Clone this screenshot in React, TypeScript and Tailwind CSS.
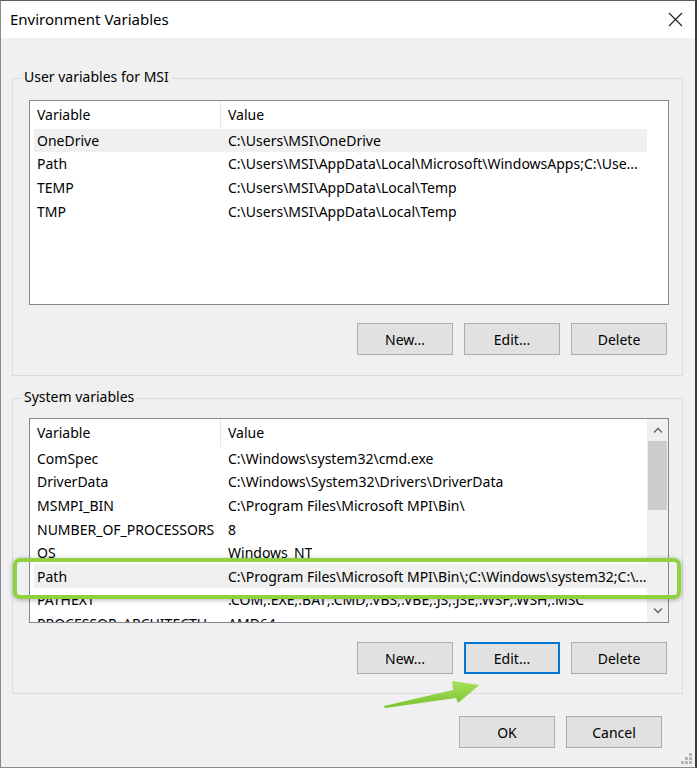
import React from 'react';

type Row = { name: string; value: string; selected?: boolean };

const userVars: Row[] = [
  { name: 'OneDrive', value: 'C:\\Users\\MSI\\OneDrive', selected: true },
  { name: 'Path', value: 'C:\\Users\\MSI\\AppData\\Local\\Microsoft\\WindowsApps;C:\\Use...' },
  { name: 'TEMP', value: 'C:\\Users\\MSI\\AppData\\Local\\Temp' },
  { name: 'TMP', value: 'C:\\Users\\MSI\\AppData\\Local\\Temp' },
];

const systemVars: Row[] = [
  { name: 'ComSpec', value: 'C:\\Windows\\system32\\cmd.exe' },
  { name: 'DriverData', value: 'C:\\Windows\\System32\\Drivers\\DriverData' },
  { name: 'MSMPI_BIN', value: 'C:\\Program Files\\Microsoft MPI\\Bin\\' },
  { name: 'NUMBER_OF_PROCESSORS', value: '8' },
  { name: 'OS', value: 'Windows_NT' },
  { name: 'Path', value: 'C:\\Program Files\\Microsoft MPI\\Bin\\;C:\\Windows\\system32;C:\\...', selected: true },
  { name: 'PATHEXT', value: '.COM;.EXE;.BAT;.CMD;.VBS;.VBE;.JS;.JSE;.WSF;.WSH;.MSC' },
  { name: 'PROCESSOR_ARCHITECTU...', value: 'AMD64' },
];

function Button({ label, focused }: { label: string; focused?: boolean }) {
  return (
    <div
      className={`w-[96px] h-[32px] flex items-center justify-center bg-[#e1e1e1] text-black ${
        focused ? 'border-2 border-[#0078d7]' : 'border border-[#adadad]'
      }`}
    >
      {label}
    </div>
  );
}

function VarTable({ rows, scroll }: { rows: Row[]; scroll?: boolean }) {
  return (
    <div className="w-[640px] h-[205px] border border-[#828790] bg-white flex overflow-hidden">
      {/* list */}
      <div className="flex-1 pl-[4px] overflow-hidden">
        <div className="flex h-[27.5px] items-center">
          <div className="w-[187px] h-full flex items-center pl-[3px] border-r border-[#e5e5e5]">Variable</div>
          <div className="pl-[7px]">Value</div>
        </div>
        {rows.map((r) => (
          <div
            key={r.name}
            className={`flex h-[23.6px] items-center whitespace-nowrap ${r.selected ? 'bg-[#f0f0f0]' : ''}`}
          >
            <div className="w-[187px] shrink-0 pl-[3px] overflow-hidden">{r.name}</div>
            <div className="pl-[7px] overflow-hidden">{r.value}</div>
          </div>
        ))}
      </div>

      {/* scrollbar column */}
      <div className={`w-[21px] h-full flex flex-col ${scroll ? 'bg-[#f0f0f0]' : 'bg-white'}`}>
        {scroll && (
          <>
            <div className="h-[22px] flex items-center justify-center">
              <svg width="10" height="6" viewBox="0 0 10 6">
                <path d="M1 5.5 L5 1.5 L9 5.5" fill="none" stroke="#606060" strokeWidth="1.3" />
              </svg>
            </div>
            <div className="mx-[1px] h-[69px] bg-[#cdcdcd]" />
            <div className="flex-1" />
            <div className="h-[22px] flex items-center justify-center">
              <svg width="10" height="6" viewBox="0 0 10 6">
                <path d="M1 0.5 L5 4.5 L9 0.5" fill="none" stroke="#606060" strokeWidth="1.3" />
              </svg>
            </div>
          </>
        )}
      </div>
    </div>
  );
}

function Group({
  title,
  rows,
  scroll,
  focusedEdit,
  className,
  tablePad,
  btnGap,
  bottomPad,
}: {
  title: string;
  rows: Row[];
  scroll?: boolean;
  focusedEdit?: boolean;
  className: string;
  tablePad: string;
  btnGap: string;
  bottomPad: string;
}) {
  return (
    <div className={`relative ml-[11px] w-[671px] border border-[#dcdcdc] pl-[16px] ${tablePad} ${bottomPad} ${className}`}>
      <span className="absolute left-[9px] -top-[12px] px-[2px] leading-[20px] bg-[#f0f0f0]">{title}</span>
      <VarTable rows={rows} scroll={scroll} />
      <div className={`w-[640px] flex justify-end gap-[11px] pr-[2px] ${btnGap}`}>
        <Button label="New..." />
        <Button label="Edit..." focused={focusedEdit} />
        <Button label="Delete" />
      </div>
    </div>
  );
}

export default function App() {
  return (
    <div
      className="relative w-[697px] h-[768px] overflow-hidden bg-[#f0f0f0] border-l border-t border-b border-r-2 border-l-[#8a8a8a] border-t-[#5a5a5a] border-b-[#8a8a8a] border-r-[#3c3c3c] text-[14px] text-black flex flex-col"
      style={{ fontFamily: '"Noto Sans", "Open Sans", Arial, sans-serif' }}
    >
      {/* Title bar */}
      <div className="h-[37px] shrink-0 bg-white flex items-center justify-between pl-[9px] pr-[12px]">
        <span className="text-[15px]">Environment Variables</span>
        <svg width="15" height="15" viewBox="0 0 15 15">
          <path d="M1 1 L14 14 M14 1 L1 14" stroke="#1a1a1a" strokeWidth="1.1" />
        </svg>
      </div>

      <Group
        title="User variables for MSI"
        rows={userVars}
        className="mt-[40px]"
        tablePad="pt-[21px]"
        btnGap="mt-[18px]"
        bottomPad="pb-[20px]"
      />

      <Group
        title="System variables"
        rows={systemVars}
        scroll
        focusedEdit
        className="mt-[22px]"
        tablePad="pt-[19px]"
        btnGap="mt-[19px]"
        bottomPad="pb-[19px]"
      />

      {/* OK / Cancel */}
      <div className="mt-[22px] flex justify-end gap-[11px] pr-[33px]">
        <Button label="OK" />
        <Button label="Cancel" />
      </div>

      {/* resize grip */}
      <div className="absolute right-[3px] bottom-[3px] grid grid-cols-3 gap-[1px]">
        <span className="w-[3px] h-[3px]" />
        <span className="w-[3px] h-[3px]" />
        <span className="w-[3px] h-[3px] bg-[#b5b5b5]" />
        <span className="w-[3px] h-[3px]" />
        <span className="w-[3px] h-[3px] bg-[#b5b5b5]" />
        <span className="w-[3px] h-[3px] bg-[#b5b5b5]" />
        <span className="w-[3px] h-[3px] bg-[#b5b5b5]" />
        <span className="w-[3px] h-[3px] bg-[#b5b5b5]" />
        <span className="w-[3px] h-[3px] bg-[#b5b5b5]" />
      </div>

      {/* green highlight annotation */}
      <div className="absolute left-[12px] top-[557px] w-[668px] h-[41px] rounded-[7px] border-[4px] border-[#8fd13f] shadow-[0_1px_5px_rgba(0,0,0,0.3)]" />

      {/* green arrow annotation */}
      <svg className="absolute left-[380px] top-[676px]" width="102" height="34" viewBox="380 676 102 34">
        <defs>
          <linearGradient id="arrowFill" x1="0" y1="0" x2="0" y2="1">
            <stop offset="0" stopColor="#a6e05a" />
            <stop offset="1" stopColor="#7cc22e" />
          </linearGradient>
        </defs>
        <polygon
          points="383,705 452,689 451,680 478.5,684 457,702 455,697 384,707"
          fill="url(#arrowFill)"
        />
      </svg>
    </div>
  );
}
